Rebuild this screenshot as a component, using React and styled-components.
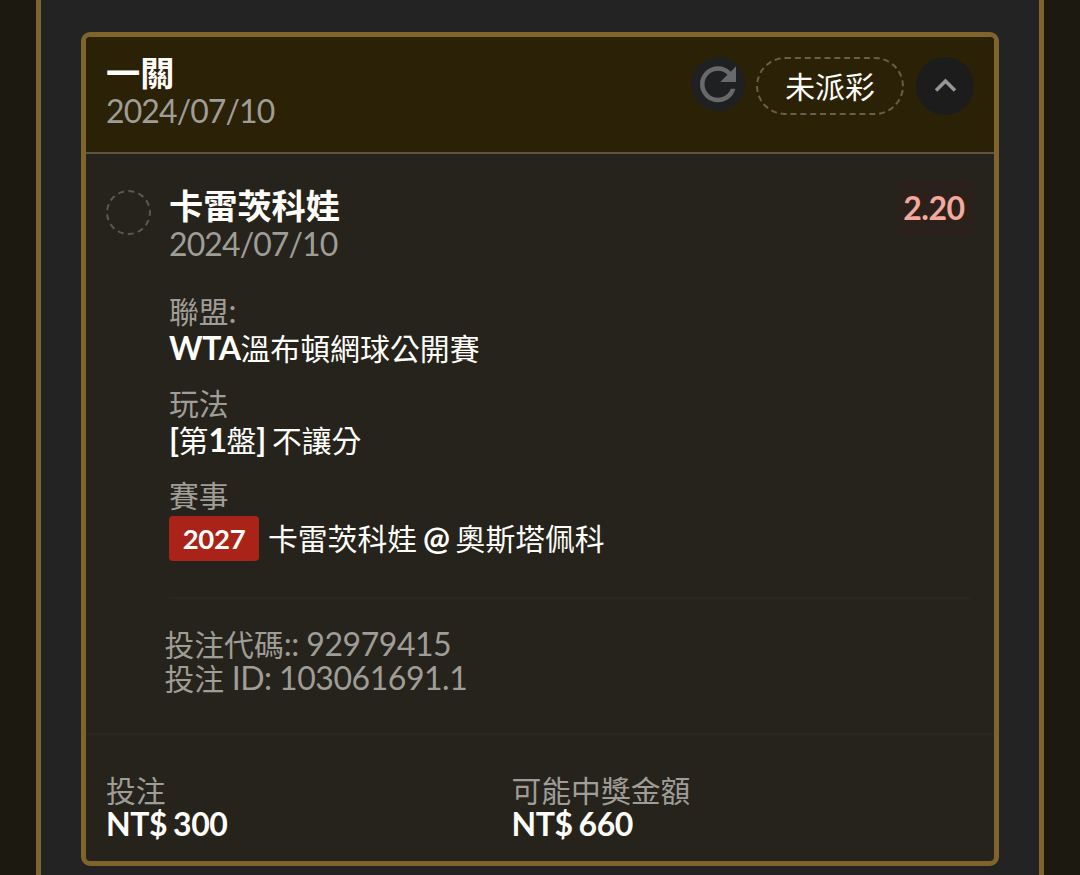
import React from "react";
import styled, { createGlobalStyle } from "styled-components";

const GlobalStyle = createGlobalStyle`
  * { box-sizing: border-box; }
  body {
    margin: 0;
    background: #1c1911;
    font-family: Lato, "Noto Sans CJK TC", sans-serif;
    overflow: hidden;
  }
`;

const Page = styled.div`
  display: flex;
  height: 875px;
  padding: 0 36px;
`;

const Panel = styled.main`
  flex: 1;
  padding: 32px 40px 0;
  background: #232323;
  border: solid #7f652b;
  border-width: 0 5px;
`;

const Card = styled.article`
  display: flex;
  flex-direction: column;
  width: 918px;
  height: 834px;
  background: #26231c;
  border: 5px solid #7f652b;
  border-radius: 9px;
  overflow: hidden;
`;

const Header = styled.header`
  display: flex;
  justify-content: space-between;
  height: 117px;
  padding: 20px 20px 0;
  background: #2b2107;
  border-bottom: 2px solid #5e543f;
`;

const HeaderText = styled.div`
  margin-top: -2px;
`;

const Actions = styled.div`
  display: flex;
  align-items: flex-start;
`;

const Line = styled.div`
  height: ${(p) => p.$h || 37}px;
  line-height: ${(p) => p.$h || 37}px;
  font-size: 32px;
  font-weight: ${(p) => (p.$bold ? 700 : 400)};
  letter-spacing: -0.45px;
  word-spacing: -1.3px;
  color: ${(p) => (p.$bold ? "#fffefa" : "#9f9d97")};
  white-space: nowrap;
`;

const DateLine = styled(Line)`
  letter-spacing: -0.9px;
`;

const CodeLine = styled(Line)`
  word-spacing: -0.2px;
`;

const Cjk = styled.span`
  font-family: "Noto Sans CJK TC", sans-serif;
  font-size: ${(p) => p.$size || 29.8}px;
  font-weight: ${(p) => (p.$bold ? 700 : 400)};
  letter-spacing: 0;
  line-height: 0;
`;

const RefreshButton = styled.button`
  display: flex;
  align-items: center;
  justify-content: center;
  width: 54px;
  height: 54px;
  margin-right: 11px;
  padding: 0;
  border: 0;
  border-radius: 50%;
  background: #1e2021;
  color: #696969;
`;

const Status = styled.div`
  width: 148px;
  height: 58px;
  margin-right: 12px;
  border: 2px dashed #6a5d4b;
  border-radius: 30px;
  color: #fffefa;
  font-size: 31px;
  line-height: 55px;
  text-align: center;
`;

const ToggleButton = styled(RefreshButton)`
  width: 58px;
  height: 58px;
  margin-right: 0;
  background: #1c1c1c;
  color: #969696;
`;

const Selection = styled.section`
  display: flex;
  height: 581px;
  padding: 36px 24px 0 20px;
  border-bottom: 2px solid #292720;
`;

const Marker = styled.div`
  flex: none;
  width: 45px;
  height: 45px;
  margin-right: 18px;
  border: 2px dashed #5b5852;
  border-radius: 50%;
`;

const Details = styled.div`
  flex: 1;
  margin-top: -2px;
`;

const Top = styled.div`
  display: flex;
  justify-content: space-between;
  height: 104px;
`;

const Odds = styled.div`
  width: 76px;
  height: 54px;
  margin: -7px -4px 0 0;
  padding-right: 4px;
  border-radius: 4px;
  background: #2b201a;
  color: #f2a99e;
  font-size: 32px;
  font-weight: 700;
  letter-spacing: -0.45px;
  line-height: 53px;
  text-align: center;
`;

const Field = styled.div`
  height: ${(p) => p.$h || 92}px;
`;

const Match = styled.div`
  display: flex;
  align-items: center;
  gap: 9px;
  height: 45px;
  margin-top: 3px;
`;

const MatchLine = styled(Line)`
  margin-top: -2px;
`;

const Badge = styled.span`
  width: 90px;
  height: 45px;
  border-radius: 4px;
  background: #aa2318;
  color: #fffefa;
  font-size: 27.5px;
  font-weight: 700;
  letter-spacing: -0.3px;
  line-height: 46px;
  text-align: center;
`;

const Codes = styled.div`
  margin-left: -4.5px;
  padding: 28px 0 0 0;
`;

const Rule = styled.div`
  height: 2px;
  background: #292720;
`;

const Footer = styled.footer`
  display: grid;
  grid-template-columns: 405.5px 1fr;
  padding: 38px 20px 0;
`;

export default function App() {
  return (
    <>
      <GlobalStyle />
      <Page>
        <Panel>
          <Card>
            <Header>
              <HeaderText>
                <Line $bold><Cjk $bold $size={34.2}>一關</Cjk></Line>
                <DateLine>2024/07/10</DateLine>
              </HeaderText>
              <Actions>
                <RefreshButton aria-label="refresh">
                  <svg width="54.7" height="54.7" viewBox="0 0 24 24" fill="currentColor">
                    <path d="M17.65 6.35C16.2 4.9 14.21 4 12 4c-4.42 0-7.99 3.58-7.99 8s3.57 8 7.99 8c3.73 0 6.84-2.55 7.73-6h-2.08c-.82 2.33-3.04 4-5.65 4-3.31 0-6-2.69-6-6s2.69-6 6-6c1.66 0 3.14.69 4.22 1.78L13 11h7V4l-2.35 2.35z" />
                  </svg>
                </RefreshButton>
                <Status><Cjk>未派彩</Cjk></Status>
                <ToggleButton aria-label="collapse">
                  <svg width="43" height="43" viewBox="0 0 24 24" fill="currentColor">
                    <path d="M12 7.5l-6 6 1.41 1.41L12 10.33l4.59 4.58L18 13.5z" />
                  </svg>
                </ToggleButton>
              </Actions>
            </Header>
            <Selection>
              <Marker />
              <Details>
                <Top>
                  <div>
                    <Line $bold><Cjk $bold $size={34.2}>卡雷茨科娃</Cjk></Line>
                    <DateLine>2024/07/10</DateLine>
                  </div>
                  <Odds>2.20</Odds>
                </Top>
                <Field>
                  <Line><Cjk>聯盟</Cjk>:</Line>
                  <Line $bold>WTA<Cjk $size={29.9}>溫布頓網球公開賽</Cjk></Line>
                </Field>
                <Field>
                  <Line><Cjk>玩法</Cjk></Line>
                  <Line $bold>[<Cjk>第</Cjk>1<Cjk>盤</Cjk>] <Cjk>不讓分</Cjk></Line>
                </Field>
                <Field $h={121}>
                  <Line><Cjk>賽事</Cjk></Line>
                  <Match>
                    <Badge>2027</Badge>
                    <MatchLine $bold><Cjk>卡雷茨科娃</Cjk> @ <Cjk>奧斯塔佩科</Cjk></MatchLine>
                  </Match>
                </Field>
                <Rule />
                <Codes>
                  <CodeLine $h={34}><Cjk>投注代碼</Cjk>:: 92979415</CodeLine>
                  <CodeLine $h={34}><Cjk>投注</Cjk> ID: 103061691.1</CodeLine>
                </Codes>
              </Details>
            </Selection>
            <Footer>
              <div>
                <Line $h={34}><Cjk>投注</Cjk></Line>
                <Line $h={34} $bold>NT$ 300</Line>
              </div>
              <div>
                <Line $h={34}><Cjk>可能中獎金額</Cjk></Line>
                <Line $h={34} $bold>NT$ 660</Line>
              </div>
            </Footer>
          </Card>
        </Panel>
      </Page>
    </>
  );
}
